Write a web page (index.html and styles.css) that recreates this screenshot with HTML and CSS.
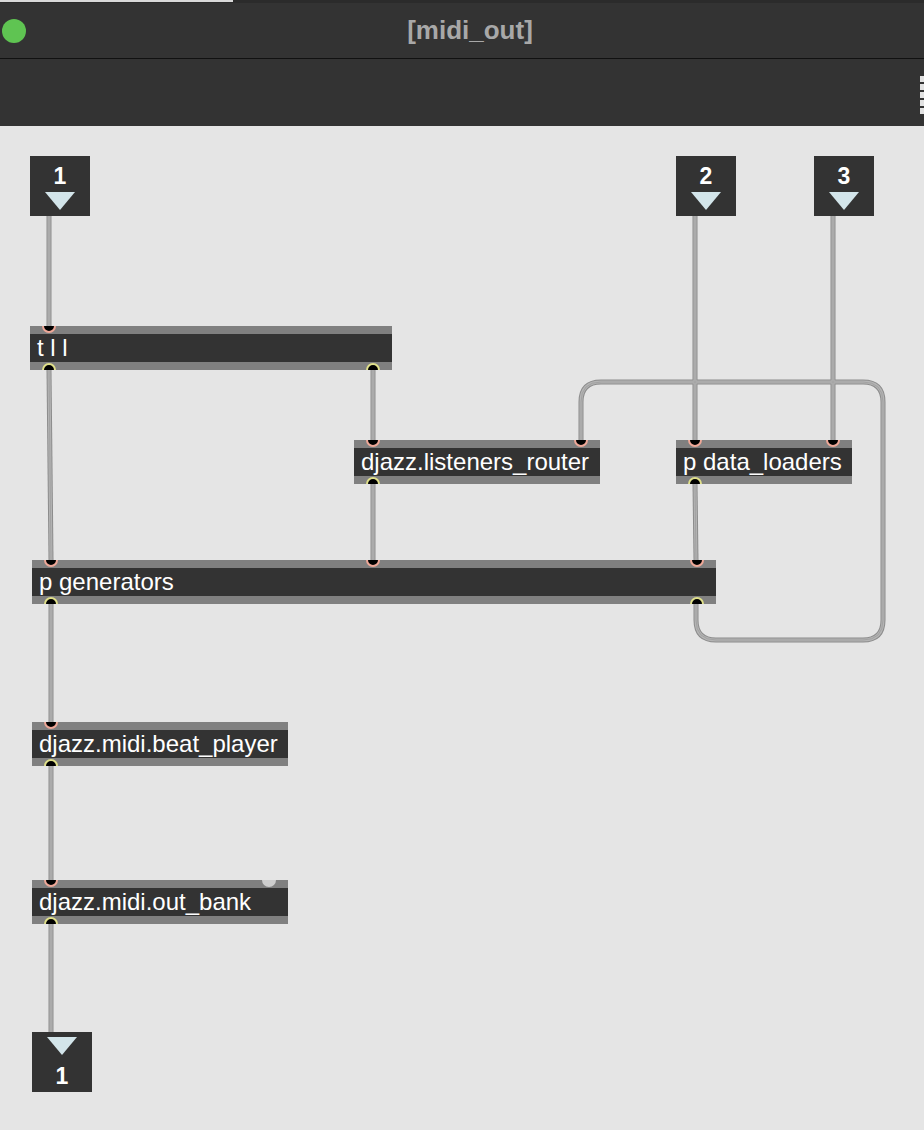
FILE: index.html
```html
<!DOCTYPE html>
<html lang="en">
<head>
    <meta charset="UTF-8">
    <meta name="viewport" content="width=device-width, initial-scale=1.0">
    <link rel="stylesheet" href="styles.css">
</head>
<body>
    <div class="window">
        <div class="topstrip"><div class="topstrip-tab"></div></div>

        <!-- Barre de titre -->
        <div class="titlebar">
            <span class="light"></span>
            <span class="title">[midi_out]</span>
        </div>

        <div class="toolbar">
            <div class="grip">
                <span></span><span></span><span></span><span></span><span></span>
            </div>
        </div>

        <!-- Patcher -->
        <div class="canvas">
            <svg class="cords" width="924" height="1004" viewBox="0 0 924 1004">
                <defs>
                    <g id="wires">
                        <path d="M49 90 L49 200"/>
                        <path d="M49 244 L51 434"/>
                        <path d="M373 244 L373 314"/>
                        <path d="M373 358 L373 434"/>
                        <path d="M695 90 L695 314"/>
                        <path d="M833 90 L833 314"/>
                        <path d="M695 358 L696 434"/>
                        <path d="M696 478 L696 494 Q696 514 716 514 L863 514 Q883 514 883 494 L883 276 Q883 256 863 256 L601 256 Q581 256 581 276 L581 314"/>
                        <path d="M51 478 L51 596"/>
                        <path d="M51 640 L51 754"/>
                        <path d="M51 798 L51 906"/>
                    </g>
                </defs>
                <use href="#wires" class="cord-edge"/>
                <use href="#wires" class="cord-fill"/>
                <use href="#wires" class="cord-core"/>
            </svg>

            <div class="io inlet in-1">
                <span class="io-num">1</span>
                <span class="io-arrow"></span>
            </div>
            <div class="io inlet in-2">
                <span class="io-num">2</span>
                <span class="io-arrow"></span>
            </div>
            <div class="io inlet in-3">
                <span class="io-num">3</span>
                <span class="io-arrow"></span>
            </div>

            <div class="obj n-tll">
                <span class="port in first"></span>
                <div class="label">t l l</div>
                <span class="port out first"></span>
                <span class="port out last"></span>
            </div>

            <div class="obj n-router">
                <span class="port in first"></span>
                <span class="port in last"></span>
                <div class="label">djazz.listeners_router</div>
                <span class="port out first"></span>
            </div>

            <div class="obj n-loaders">
                <span class="port in first"></span>
                <span class="port in last"></span>
                <div class="label">p data_loaders</div>
                <span class="port out first"></span>
            </div>

            <div class="obj n-gen">
                <span class="port in first"></span>
                <span class="port in mid"></span>
                <span class="port in last"></span>
                <div class="label">p generators</div>
                <span class="port out first"></span>
                <span class="port out last"></span>
            </div>

            <div class="obj n-beat">
                <span class="port in first"></span>
                <div class="label">djazz.midi.beat_player</div>
                <span class="port out first"></span>
            </div>

            <div class="obj n-bank">
                <span class="port in first"></span>
                <span class="port dim"></span>
                <div class="label">djazz.midi.out_bank</div>
                <span class="port out first"></span>
            </div>

            <div class="io outlet out-1">
                <span class="io-arrow"></span>
                <span class="io-num">1</span>
            </div>
        </div>
    </div>
</body>
</html>
```

FILE: styles.css
```css
/* Fenêtre du patcher */
body {
    margin: 0;
    background: #e5e5e5;
    font-family: "Liberation Sans", Arial, sans-serif;
}

.window {
    width: 924px;
    height: 1130px;
    overflow: hidden;
}

.topstrip {
    height: 3px;
    background: #2b2b2b;
}

.topstrip-tab {
    width: 233px;
    height: 2px;
    background: #d9d9d9;
}

.titlebar {
    height: 55px;
    background: #333333;
    border-bottom: 1px solid #111111;
    display: flex;
    align-items: center;
}

.light {
    width: 24px;
    height: 24px;
    border-radius: 50%;
    background: #5fc452;
    margin-left: 2px;
}

.title {
    flex: 1;
    text-align: center;
    padding-left: 16px;
    margin-right: 26px;
    color: #a8a8a8;
    font-weight: bold;
    font-size: 26px;
}

.toolbar {
    height: 67px;
    background: #333333;
    display: flex;
    justify-content: flex-end;
    align-items: center;
}

.grip {
    display: flex;
    flex-direction: column;
    gap: 2px;
    margin-top: 4px;
}

.grip span {
    width: 4px;
    height: 6px;
    background: #e2e2e2;
}

/* Zone de dessin */
.canvas {
    position: relative;
    height: 1004px;
}

.cords {
    position: absolute;
    left: 0;
    top: 0;
    fill: none;
}

.cord-edge {
    stroke: #8c8c8c;
    stroke-width: 5;
}

.cord-fill {
    stroke: #b4b4b4;
    stroke-width: 3;
}

.cord-core {
    stroke: #a2a2a2;
    stroke-width: 1;
}

/* Inlets / outlets du patcher */
.io {
    position: absolute;
    width: 60px;
    height: 60px;
    background: #333333;
    display: flex;
    flex-direction: column;
    align-items: center;
    color: #ffffff;
}

.io-num {
    font-weight: bold;
    font-size: 23px;
    line-height: 22px;
}

.io-arrow {
    width: 0;
    height: 0;
    border-left: 15px solid transparent;
    border-right: 15px solid transparent;
    border-top: 18px solid #d3e5ea;
}

.inlet .io-num { margin-top: 9px; }
.inlet .io-arrow { margin-top: 5px; }

.outlet .io-arrow { margin-top: 5px; }
.outlet .io-num { margin-top: 10px; }

.in-1 { left: 30px; top: 30px; }
.in-2 { left: 676px; top: 30px; }
.in-3 { left: 814px; top: 30px; }
.out-1 { left: 32px; top: 906px; }

/* Objets */
.obj {
    position: absolute;
    height: 44px;
    box-sizing: border-box;
    padding: 8px 0;
    background: #808080;
    overflow: hidden;
}

.obj .label {
    height: 28px;
    line-height: 27px;
    background: #333333;
    color: #ffffff;
    font-size: 24px;
    padding-left: 7px;
    white-space: nowrap;
}

.port {
    position: absolute;
    width: 14px;
    height: 14px;
    box-sizing: border-box;
    border-radius: 50%;
    background: #000000;
}

.port.in {
    top: -7px;
    border: 2px solid #efa898;
}

.port.out {
    bottom: -7px;
    border: 2px solid #e0e08a;
}

.port.first { left: 12px; }
.port.last { right: 12px; }
.port.mid { left: 334px; }

.port.dim {
    top: -7px;
    left: 230px;
    background: #cdcdcd;
}

.n-tll { left: 30px; top: 200px; width: 362px; }
.n-router { left: 354px; top: 314px; width: 246px; }
.n-loaders { left: 676px; top: 314px; width: 176px; }
.n-gen { left: 32px; top: 434px; width: 684px; }
.n-beat { left: 32px; top: 596px; width: 256px; }
.n-bank { left: 32px; top: 754px; width: 256px; }
```
